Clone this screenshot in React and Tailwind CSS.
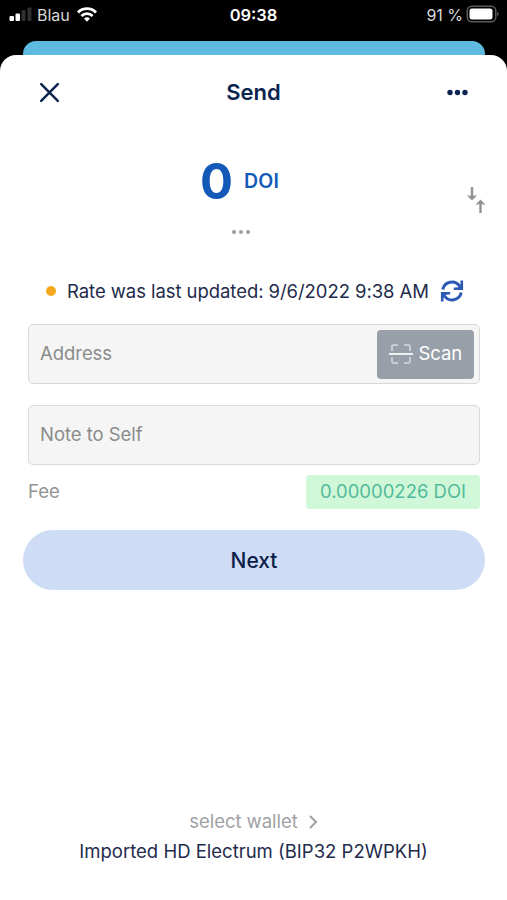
import React from 'react';

const StatusBar = () => (
  <div className="h-[41px] flex justify-between px-[9px] pt-[5px] text-[#d8d8d8] text-[16px] leading-5">
    <div className="flex-1 flex">
      <svg className="w-[23px] h-5" viewBox="0 0 23 20">
        <rect x="0.5" y="11" width="4.5" height="5" rx="1" fill="#fff" />
        <rect x="6.5" y="8.5" width="4.5" height="7.5" rx="1" fill="#fff" />
        <rect x="12.5" y="5" width="4" height="11" rx="1" fill="#303030" />
        <rect x="18.5" y="2.5" width="4" height="13.5" rx="1" fill="#303030" />
      </svg>
      <span className="ml-[5px] w-[34px] text-[16px] whitespace-nowrap">Blau</span>
      <svg className="ml-[5px] w-[22px] h-5" viewBox="0 0 22 20" fill="none" stroke="#fff" strokeWidth="2.8">
        <path d="M2 7.4a12.6 12.6 0 0 1 18 0" />
        <path d="M5.4 11a7.8 7.8 0 0 1 11.2 0" />
        <path d="M11 16.8l-3-3.2a4.2 4.2 0 0 1 6 0z" fill="#fff" stroke="none" />
      </svg>
    </div>
    <span className="text-white font-semibold text-[16.5px]">09:38</span>
    <div className="flex-1 flex justify-end">
      <span className="whitespace-nowrap">91 %</span>
      <svg className="ml-[3px] mr-[-1px] w-[33px] h-5" viewBox="0 0 33 20">
        <rect x="1.25" y="1.25" width="28.5" height="15.5" rx="4.5" fill="none" stroke="#5a5a5a" strokeWidth="1.5" />
        <rect x="3.5" y="3.5" width="23" height="11" rx="2.5" fill="#fff" />
        <path d="M31.2 7c2 .8 2 3.2 0 4z" fill="#5a5a5a" />
      </svg>
    </div>
  </div>
);

const Header = () => (
  <div className="h-[75px] flex items-center justify-between px-[39px] text-[#0c2550]">
    <svg className="w-[21px] h-[21px]" viewBox="0 0 21 21" fill="none" stroke="currentColor" strokeWidth="2.5" strokeLinecap="round">
      <path d="M2.2 2.2l16.6 16.6M18.8 2.2L2.2 18.8" />
    </svg>
    <h1 className="text-[22px] font-semibold">Send</h1>
    <svg className="w-[21px] h-[21px]" viewBox="0 0 21 21" fill="currentColor">
      <circle cx="3" cy="10.5" r="2.7" />
      <circle cx="10.5" cy="10.5" r="2.7" />
      <circle cx="18" cy="10.5" r="2.7" />
    </svg>
  </div>
);

const Amount = () => (
  <div className="h-[148px] flex justify-between">
    <div className="w-[13px]" />
    <div className="pt-[21px] flex flex-col items-center">
      <div className="h-[60px] flex items-center text-[#1259b8]">
        <span className="text-[49px] font-bold leading-none">0</span>
        <span className="ml-[11px] pt-px text-[19.5px] font-semibold tracking-[0.2px]">DOI</span>
      </div>
      <div className="mt-[19px] ml-[3px] flex gap-[3px]">
        <span className="w-[4px] h-[4px] rounded-full bg-[#9a9da2]" />
        <span className="w-[4px] h-[4px] rounded-full bg-[#9a9da2]" />
        <span className="w-[4px] h-[4px] rounded-full bg-[#9a9da2]" />
      </div>
    </div>
    <svg className="mt-[56px] mr-[21px] w-[20px] h-[28px]" viewBox="0 0 20 28" fill="none" stroke="#929292" strokeWidth="2.4">
      <path d="M6 1v11M14.5 27V16" />
      <path d="M2.6 10L6 10.8 9.4 10 6 13.6zM11.1 18L14.5 17.2 17.9 18 14.5 14.4z" fill="#929292" strokeWidth="1.2" />
    </svg>
  </div>
);

const RateInfo = () => (
  <div className="h-[26px] flex items-center pl-[46px] text-[#232b4c]">
    <span className="w-[10px] h-[10px] rounded-full bg-[#f6a91c]" />
    <span className="ml-[11px] pt-[2px] w-[362px] text-[18.5px] tracking-[-0.06px] whitespace-nowrap">Rate was last updated: 9/6/2022 9:38 AM</span>
    <svg className="ml-[11px] w-[24px] h-[24px]" viewBox="0 0 24 24" fill="none" stroke="#2b59b3" strokeWidth="3">
      <path d="M2.8 10.5A9.3 9.3 0 0 1 19.5 7M21.2 13.5A9.3 9.3 0 0 1 4.5 17" />
      <path d="M21.8 1.5v8.200h-8M2.200 22.500v-8.200h8" strokeWidth="2.6" />
      <path d="M22 4v6h-6zM2 20v-6h6z" fill="#2b59b3" stroke="none" />
    </svg>
  </div>
);

const ScanButton = () => (
  <button className="w-[97px] h-[49px] rounded-[4px] bg-[#989fa9] flex items-center pl-[12px] text-white">
    <svg className="w-[24px] h-[22px]" viewBox="0 0 24 22" fill="none" stroke="#c9cdd3" strokeWidth="2">
      <path d="M3 8V4q0-2 2-2h4M15 2h4q2 0 2 2v4M3 14v4q0 2 2 2h4M15 20h4q2 0 2-2v-4" />
      <path d="M0 11h24" stroke="#eef0f2" />
    </svg>
    <span className="ml-[6px] text-[18.5px] tracking-[-0.1px]">Scan</span>
  </button>
);

const Field = ({ label, children }) => (
  <div className="h-[60px] pl-[11px] pr-[5.5px] rounded-[5px] border-[1.5px] border-[#d9d9d9] bg-[#f5f5f5] flex items-center justify-between">
    <span className="text-[18.5px] tracking-[-0.05px] text-[#8b8b8b]">{label}</span>
    {children}
  </div>
);

const App = () => {
  return (
    <div className="w-full h-[900px] overflow-hidden bg-black flex flex-col font-['Inter',sans-serif]">
      <StatusBar />
      <div className="h-[14px] ml-[23px] mr-[22px] rounded-t-[13px] bg-[#5dbbdf]" />
      <main className="flex-1 flex flex-col bg-white rounded-t-[16px]">
        <Header />
        <Amount />
        <RateInfo />
        <div className="mt-[20px] ml-[28px] mr-[27px] flex flex-col">
          <Field label="Address">
            <ScanButton />
          </Field>
          <div className="h-[21px]" />
          <Field label="Note to Self" />
          <div className="mt-[10px] flex items-center justify-between">
            <span className="text-[18.5px] text-[#929292]">Fee</span>
            <span className="w-[174px] h-[34px] rounded-[4px] bg-[#d0f8d8] text-[#52bb9a] text-[18.5px] flex items-center justify-center">
              0.00000226 DOI
            </span>
          </div>
        </div>
        <button className="mt-[21px] ml-[23px] mr-[22px] h-[60px] pt-[2px] rounded-full bg-[#cedcf5] text-[#0c2048] text-[21px] font-medium">
          Next
        </button>
        <div className="mt-auto pb-[34px] flex flex-col items-center">
          <div className="h-[29px] flex items-center text-[#a0a1a4]">
            <span className="pt-px text-[18.5px] tracking-[-0.05px]">select wallet</span>
            <svg className="ml-[10px] w-[10px] h-[14px]" viewBox="0 0 10 14" fill="none" stroke="currentColor" strokeWidth="2">
              <path d="M2 1l6 6-6 6" />
            </svg>
          </div>
          <span className="h-[30px] leading-[30px] text-[18.5px] text-[#232b4c] whitespace-nowrap">Imported HD Electrum (BIP32 P2WPKH)</span>
        </div>
      </main>
    </div>
  );
};

export default App;
